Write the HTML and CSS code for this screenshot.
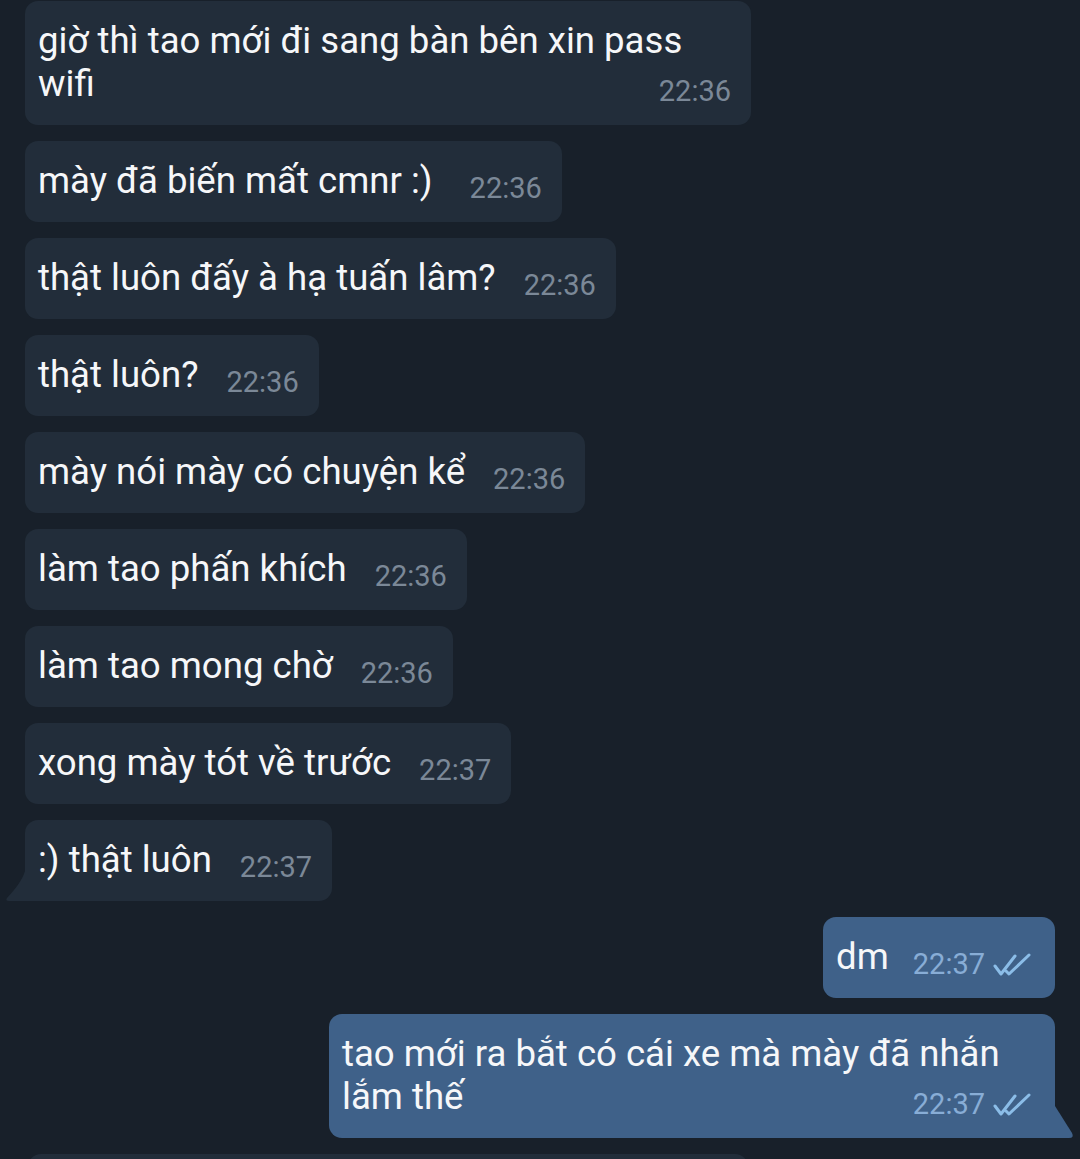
FILE: index.html
```html
<!DOCTYPE html>
<html lang="vi">
<head>
  <meta charset="UTF-8" />
  <meta name="viewport" content="width=device-width, initial-scale=1" />
  <title>Chat</title>
  <link rel="stylesheet" href="styles.css">
</head>
<body>
  <div class="chat">

    <div class="bubble in">
      giờ thì tao mới đi sang bàn bên xin pass wifi<span class="time">22:36</span>
    </div>

    <div class="bubble in">
      mày đã biến mất cmnr :)&nbsp;<span class="time">22:36</span>
    </div>

    <div class="bubble in">
      thật luôn đấy à hạ tuấn lâm?<span class="time">22:36</span>
    </div>

    <div class="bubble in">
      thật luôn?<span class="time">22:36</span>
    </div>

    <div class="bubble in">
      mày nói mày có chuyện kể<span class="time">22:36</span>
    </div>

    <div class="bubble in">
      làm tao phấn khích<span class="time">22:36</span>
    </div>

    <div class="bubble in">
      làm tao mong chờ<span class="time">22:36</span>
    </div>

    <div class="bubble in">
      xong mày tót về trước<span class="time">22:37</span>
    </div>

    <div class="bubble in tail">
      :) thật luôn<span class="time">22:37</span>
      <svg class="tail-icon" width="20" height="30" viewBox="0 0 20 30"><path d="M20 0 V30 H4 Q0 30 2 27 C10 18 17 10 20 0 Z"/></svg>
    </div>

    <div class="bubble out">
      dm<span class="time">22:37<svg class="checks" width="40" height="24" viewBox="0 0 40 24"><path d="M2 13 L8 21 L22 3 M13 18 L16 21 L36 2"/></svg></span>
    </div>

    <div class="bubble out tail">
      tao mới ra bắt có cái xe mà mày đã nhắn lắm thế<span class="time">22:37<svg class="checks" width="40" height="24" viewBox="0 0 40 24"><path d="M2 13 L8 21 L22 3 M13 18 L16 21 L36 2"/></svg></span>
      <svg class="tail-icon" width="20" height="32" viewBox="0 0 20 32"><path d="M0 0 L17 27 Q19.5 32 14 32 H0 Z"/></svg>
    </div>

    <div class="bubble in partial"></div>

  </div>
</body>
</html>
```

FILE: styles.css
```css
* {
  box-sizing: border-box;
}
html, body {
  height: 100%;
}
body {
  margin: 0;
  background: #18202a;
  font-family: Roboto, 'Noto Sans', sans-serif;
  color: #f6f7f9;
  overflow: hidden;
}
.chat {
  display: flex;
  flex-direction: column;
  gap: 16px;
  padding: 1px 25px 0;
}
.bubble {
  position: relative;
  max-width: 726px;
  padding: 18px 20px 20px 13px;
  border-radius: 13px;
  font-size: 36.6px;
  line-height: 43px;
  display: flow-root;
}
.bubble.in {
  align-self: flex-start;
  background: #222d3a;
}
.bubble.out {
  align-self: flex-end;
  background: #3f6189;
  padding-right: 22px;
}
.time {
  float: right;
  margin: 8px 0 -8px 28px;
  font-size: 29px;
  color: #7b8897;
  display: flex;
  align-items: center;
}
.out .time {
  margin-left: 24px;
  color: #88add6;
}
.checks {
  margin-left: 8px;
  fill: none;
  stroke: #8bbde8;
  stroke-width: 3;
  stroke-linecap: round;
  stroke-linejoin: round;
}
/* bubble tails */
.in.tail {
  border-bottom-left-radius: 0;
}
.out.tail {
  border-bottom-right-radius: 0;
}
.tail-icon {
  position: absolute;
  bottom: 0;
}
.in .tail-icon {
  left: -20px;
  fill: #222d3a;
}
.out .tail-icon {
  right: -20px;
  fill: #3f6189;
}
.partial {
  width: 720px;
  height: 124px;
  margin-left: 3px;
}
```
